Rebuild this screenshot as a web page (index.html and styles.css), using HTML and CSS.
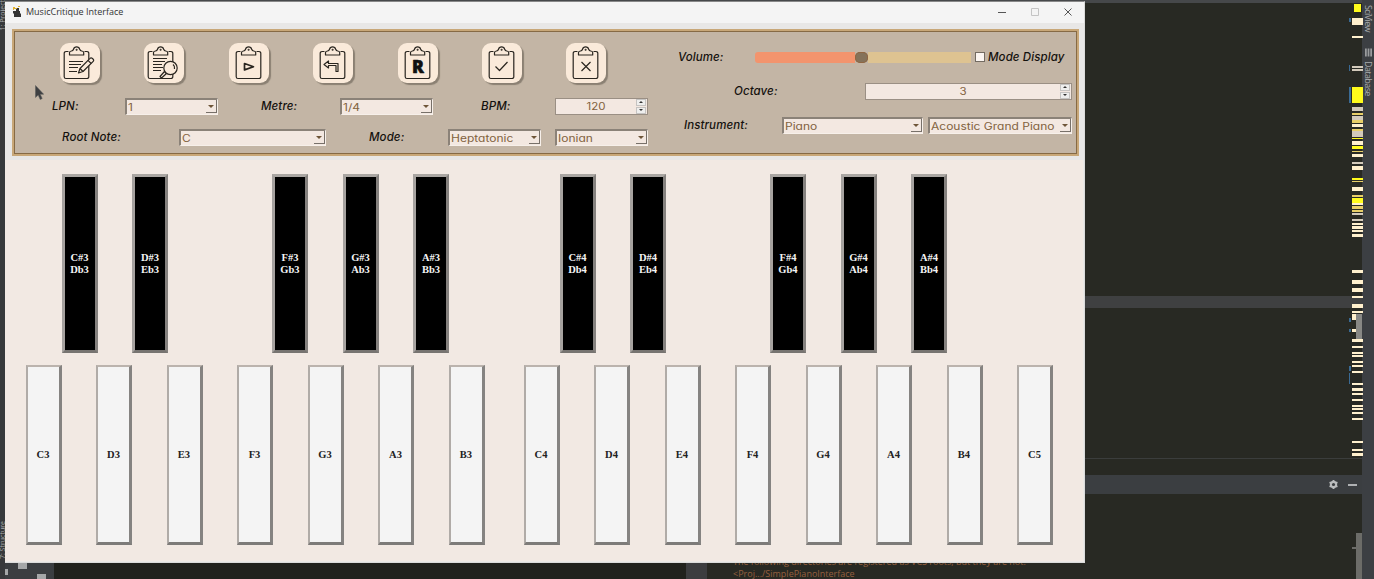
FILE: index.html
```html
<!doctype html>
<html lang="en">

<head>
    <meta charset="utf-8">
    <title>MusicCritique Interface</title>
    <link rel="stylesheet" href="styles.css">
</head>

<body>
    <!-- shared clipboard shape for the toolbar buttons -->
    <svg width="0" height="0" class="defs" aria-hidden="true">
        <symbol id="clipboard" viewBox="0 0 40 40">
            <path d="M11.500 8.500H9a1.800 1.800 0 0 0-1.800 1.800v23.400A1.800 1.800 0 0 0 9 35.500h21a1.800 1.800 0 0 0 1.800-1.800V10.300A1.800 1.800 0 0 0 30 8.500h-2.500" />
            <path d="M12.500 12v-2.500q0-1.200 2-1.500 1.500-.2 2-1.700a3.200 3.200 0 0 1 6.200 0q.5 1.500 2 1.700 2 .3 2 1.500V12z" />
            <circle cx="19.600" cy="6.800" r=".4" />
        </symbol>
    </svg>

    <div class="ide">
        <div class="ide-left"><span class="tab-project">1: Project</span><span class="tab-structure">7: Structure</span></div>
        <div class="ide-main">
            <div class="ide-top"></div>
            <div class="editor"></div>
            <div class="splitter"></div>
            <div class="editor-lower"></div>
            <div class="editor-status"></div>
            <div class="tool-header">
                <svg viewBox="0 0 12 12" class="gear"><circle cx="6" cy="6" r="3" /><path d="M6 1v10M1.700 3.500l8.600 5M1.700 8.500l8.600-5" /><circle class="hole" cx="6" cy="6" r="1.700" /></svg>
                <span class="minimize"></span>
            </div>
            <div class="console">
                <div class="console-side"><i></i><i></i><i></i></div>
                <div class="console-tree"></div>
                <div class="console-gutter"></div>
                <div class="console-log">
                    <div>The following directories are registered as VCS roots, but they are not:</div>
                    <div>&lt;Proj.../SimplePianoInterface</div>
                </div>
            </div>
            <svg class="stripe" viewBox="0 0 14 579">
                <g fill="#3a6a94">
                    <path d="M0 18h2v4H0zM0 65h1v6H0zM0 87h2v16H0zM0 318h2v4H0zM0 329h2v3H0zM0 366h2v5H0zM0 373h1v11H0z" />
                </g>
                <g fill="#fffb1c">
                    <path d="M5 4h7v8H5zM3 87h11v16H3zM3 138h11v1H3zM3 146h11v3H3zM3 178h11v2H3zM3 198h11v5H3z" />
                </g>
                <g fill="#e8cf68">
                    <path d="M3 113h11v2H3zM3 120h11v3H3zM3 129h11v2H3zM3 151h11v1H3zM3 181h11v1H3zM3 195h11v2H3zM3 206h11v3H3zM3 210h11v2H3z" />
                </g>
                <g fill="#d3cabb">
                    <path d="M3 66h11v2H3zM3 69h11v2H3zM3 107h11v4H3zM3 116h11v4H3zM3 131h11v6H3zM3 162h11v2H3zM3 213h11v2H3zM3 219h11v2H3z" />
                </g>
                <g fill="#fff0cd">
                    <path d="M3 18h11v7H3zM3 36h11v2H3zM3 124h11v3H3zM3 141h11v4H3zM3 154h11v3H3zM3 166h11v4H3zM3 187h11v4H3zM3 203h11v2H3zM3 223h11v2H3zM3 226h11v3H3zM3 230h11v2H3zM3 234h11v3H3zM3 270h11v3H3zM3 280h11v4H3zM3 288h11v4H3zM3 296h11v2H3zM3 304h11v4H3zM3 311h11v2H3zM3 314h5v6H3zM3 329h5v3H3zM3 339h11v3H3zM3 346h11v2H3zM3 352h11v2H3zM3 355h11v2H3zM3 361h11v2H3zM3 365h11v2H3zM3 371h11v2H3zM3 383h11v2H3zM3 388h11v3H3zM3 393h11v2H3zM3 399h11v2H3zM3 405h11v2H3zM3 408h11v2H3zM3 412h11v2H3zM3 418h11v2H3zM3 441h11v2H3zM3 449h11v2H3zM3 453h11v3H3z" />
                </g>
                <path fill="#888885" d="M7 314h6v25H7z" />
                <path fill="#6c6c68" d="M7 533h6v46H7zM3 547h4v2H3z" />
            </svg>
        </div>
        <div class="ide-right">
            <span class="tab-sciview">SciView</span>
            <svg viewBox="0 0 8 9" class="db-icon"><path d="M0 0h2v9H0zM3 0h2v9H3zM6 0h2v9H6z" /></svg>
            <span>Database</span>
        </div>
    </div>

    <div class="window">
        <div class="titlebar">
            <svg viewBox="0 0 10 12" class="app-icon">
                <path fill="#333" d="M1 5h7v2l1 1v3H2V8L1 7zM4 2h3v3H4z" />
                <path fill="#e3b32f" d="M1 1h2v1h2v1H2v1H1zM6 0h2v1H6z" />
            </svg>
            <span class="title">MusicCritique Interface</span>
            <div class="window-buttons">
                <svg viewBox="0 0 8 8"><path d="M0 4.500h8" /></svg>
                <svg viewBox="0 0 8 8" class="disabled"><path d="M.5.500h7v7h-7z" /></svg>
                <svg viewBox="0 0 8 8"><path d="M.5.500l7 7M7.500.500l-7 7" /></svg>
            </div>
        </div>

        <div class="panel">
            <div class="panel-left">
                <div class="toolbar">
                    <button class="tool"><svg viewBox="0 0 40 40">
                            <use href="#clipboard" transform="translate(-3)" />
                            <path d="M9 18.500h14M9 21.500h12M9 24.500h9M9 28.500h8" />
                            <path class="fill" d="M18.500 30l1.500-4.500L30 15.300a1.500 1.500 0 0 1 2.200 0l1 .9a1.500 1.500 0 0 1 0 2.200L23 28.500z" />
                            <path d="M28 17.300l3.200 3.200M20 25.500l3 3" />
                        </svg></button>
                    <button class="tool"><svg viewBox="0 0 40 40">
                            <use href="#clipboard" transform="translate(-3)" />
                            <path d="M9 15.500h14M9 18.500h12M9 21.500h9M9 24.500h10M9 27.500h8" />
                            <path class="fill" d="M20.500 28.500l2 2-5 4.500-1.500-1.500z" />
                            <circle class="fill" cx="26.500" cy="25" r="6.700" />
                            <path d="M29 21.500q2 1.500 1.500 4.500" />
                        </svg></button>
                    <button class="tool"><svg viewBox="0 0 40 40">
                            <use href="#clipboard" />
                            <path class="bold" d="M15.500 20.500l9 3.200-9 3.200z" />
                        </svg></button>
                    <button class="tool"><svg viewBox="0 0 40 40">
                            <use href="#clipboard" />
                            <path d="M11 21.500l4.500-3.500v2.500H25v8h-2v-6h-7.500V25z" />
                        </svg></button>
                    <button class="tool"><svg viewBox="0 0 40 40">
                            <use href="#clipboard" />
                            <text x="19.900" y="29.500" text-anchor="middle">R</text>
                        </svg></button>
                    <button class="tool"><svg viewBox="0 0 40 40">
                            <use href="#clipboard" />
                            <path d="M13.500 23.500l4 4 8-8.500" />
                        </svg></button>
                    <button class="tool"><svg viewBox="0 0 40 40">
                            <use href="#clipboard" />
                            <path d="M15.500 19l9 9M24.500 19l-9 9" />
                        </svg></button>
                </div>
                <div class="row row-lpn">
                    <label>LPN:</label>
                    <div class="combo"><span>1</span><i></i></div>
                    <label>Metre:</label>
                    <div class="combo"><span>1/4</span><i></i></div>
                    <label>BPM:</label>
                    <div class="spin"><span>120</span><i><b></b><b></b></i></div>
                </div>
                <div class="row row-root">
                    <label>Root Note:</label>
                    <div class="combo"><span>C</span><i></i></div>
                    <label>Mode:</label>
                    <div class="combo"><span>Heptatonic</span><i></i></div>
                    <div class="combo"><span>Ionian</span><i></i></div>
                </div>
            </div>

            <div class="panel-right">
                <div class="row row-volume">
                    <label>Volume:</label>
                    <div class="slider"><div class="slider-fill"></div><div class="slider-handle"></div><div class="slider-rest"></div></div>
                    <div class="checkbox"></div>
                    <label class="check-label">Mode Display</label>
                </div>
                <div class="row row-octave">
                    <label>Octave:</label>
                    <div class="spin"><span>3</span><i><b></b><b></b></i></div>
                </div>
                <div class="row row-instrument">
                    <label>Instrument:</label>
                    <div class="combo"><span>Piano</span><i></i></div>
                    <div class="combo"><span>Acoustic Grand Piano</span><i></i></div>
                </div>
            </div>
        </div>

        <div class="piano">
            <div class="octave">
                <div class="black-keys">
                    <div class="key black">C#3<br>Db3</div>
                    <div class="key black">D#3<br>Eb3</div>
                    <div class="key black skip">F#3<br>Gb3</div>
                    <div class="key black">G#3<br>Ab3</div>
                    <div class="key black">A#3<br>Bb3</div>
                </div>
                <div class="white-keys">
                    <div class="key">C3</div>
                    <div class="key">D3</div>
                    <div class="key">E3</div>
                    <div class="key">F3</div>
                    <div class="key">G3</div>
                    <div class="key">A3</div>
                    <div class="key">B3</div>
                </div>
            </div>
            <div class="octave">
                <div class="black-keys">
                    <div class="key black">C#4<br>Db4</div>
                    <div class="key black">D#4<br>Eb4</div>
                    <div class="key black skip">F#4<br>Gb4</div>
                    <div class="key black">G#4<br>Ab4</div>
                    <div class="key black">A#4<br>Bb4</div>
                </div>
                <div class="white-keys">
                    <div class="key">C4</div>
                    <div class="key">D4</div>
                    <div class="key">E4</div>
                    <div class="key">F4</div>
                    <div class="key">G4</div>
                    <div class="key">A4</div>
                    <div class="key">B4</div>
                    <div class="key">C5</div>
                </div>
            </div>
        </div>
    </div>

    <svg class="cursor" viewBox="0 0 9 15"><path d="M.5.500v12l2.700-2.500 2 4.500 2-1-2-4.200h3.500z" /></svg>
</body>

</html>
```
FILE: styles.css
```css
* {
    box-sizing: border-box;
}

body {
    margin: 0;
    width: 1374px;
    height: 579px;
    overflow: hidden;
    position: relative;
    background: #282923;
}

svg {
    display: block;
}

.defs {
    position: absolute;
}

/* editor behind the window */
.ide {
    display: flex;
    height: 579px;
    font-family: "Open Sans", sans-serif;
    font-size: 9px;
    color: #a9abad;
}

.ide-left {
    width: 5px;
    background: #37393b;
    display: flex;
    flex-direction: column;
    justify-content: space-between;
    padding: 0 0 20px;
}

.ide-left span {
    writing-mode: vertical-rl;
    transform: rotate(180deg);
    line-height: 5px;
    width: 5px;
    font-size: 7px;
}

.ide-main {
    flex: 1;
    display: flex;
    flex-direction: column;
    position: relative;
}

.ide-top {
    height: 3px;
    background: #46484a;
}

.editor {
    height: 293px;
}

.splitter {
    height: 12px;
    background: #3f4041;
}

.editor-lower {
    height: 151px;
    border-bottom: 1px solid #3b3d3c;
}

.editor-status {
    height: 16px;
}

.tool-header {
    height: 19px;
    background: #3b3e41;
    display: flex;
    align-items: center;
    justify-content: flex-end;
    gap: 9px;
    padding-right: 5px;
}

.gear {
    width: 11px;
    height: 11px;
    fill: #bbbdbe;
    stroke: #bbbdbe;
    stroke-width: 2;
}

.gear .hole {
    fill: #3b3e41;
    stroke: none;
}

.minimize {
    width: 9px;
    height: 2px;
    background: #afb1b3;
}

.console {
    flex: 1;
    display: flex;
    align-items: flex-end;
}

.console-side {
    width: 49px;
    height: 17px;
    background: #3b3e41;
    display: flex;
    gap: 10px;
    align-items: flex-start;
    padding-top: 1px;
}

.console-side i {
    width: 9px;
    height: 6px;
    background: #a5a7a8;
}

.console-side i:first-child {
    width: 3px;
    margin-top: 6px;
}

.console-side i:last-child {
    margin-top: 11px;
}

.console-tree {
    width: 632px;
    height: 17px;
    background: #21221d;
}

.console-gutter {
    width: 21px;
    height: 17px;
    background: #3c3d3f;
}

.console-log {
    flex: 1;
    padding-left: 26px;
    line-height: 12px;
    color: #96603f;
    white-space: nowrap;
    font-size: 9px;
    letter-spacing: 0;
    height: 23px;
}

.stripe {
    position: absolute;
    right: -1px;
    top: 0;
    width: 14px;
    height: 579px;
}

.ide-right {
    width: 12px;
    background: #3c3f43;
    display: flex;
    flex-direction: column;
    align-items: center;
    padding-top: 5px;
}

.ide-right span {
    writing-mode: vertical-rl;
    line-height: 12px;
    font-size: 9px;
    letter-spacing: -.6px;
}

.tab-sciview {
    height: 43px;
}

.db-icon {
    width: 7px;
    height: 9px;
    fill: #9a9c9e;
    margin-bottom: 4px;
}

/* application window */
.window {
    position: absolute;
    left: 5px;
    top: 1px;
    width: 1080px;
    height: 562px;
    background: #f2e9e3;
    border: 1px solid #dcdcdb;
    border-top-color: #888;
    border-left: 0;
    display: flex;
    flex-direction: column;
}

.titlebar {
    height: 21px;
    background: #f4f4f4;
    display: flex;
    align-items: center;
    padding: 0 12px 2px 7px;
}

.app-icon {
    width: 10px;
    height: 12px;
}

.title {
    margin-left: 4px;
    font: 9px "Open Sans", sans-serif;
    color: #333;
}

.window-buttons {
    margin-left: auto;
    display: flex;
    gap: 25px;
}

.window-buttons svg {
    width: 8px;
    height: 8px;
    fill: none;
    stroke: #555;
}

.window-buttons .disabled {
    stroke: #c4c4c4;
}

.panel {
    height: 137px;
    border: solid #e8e7e6;
    border-width: 6px 5px 4px 7px;
    display: flex;
    background: #c3b5a5;
    box-shadow: inset 0 0 0 2px #c8a778, inset 0 0 0 3px #866a45;
}

.panel-left {
    width: 654px;
    padding-top: 14px;
}

.panel-right {
    flex: 1;
}

.toolbar {
    display: flex;
    gap: 44.400px;
    padding-left: 48px;
}

.tool {
    width: 40px;
    height: 40px;
    padding: 0;
    border: 0;
    border-radius: 9px;
    background: #faeada;
    box-shadow: 2px 2px 1px #8b8073;
}

.tool svg {
    width: 40px;
    height: 40px;
    fill: none;
    stroke: #29251f;
    stroke-width: 1.200;
    stroke-linejoin: round;
}

.tool .fill {
    fill: #faeada;
}

.tool .bold {
    stroke-width: 1.700;
}

.tool text {
    font: 800 17.500px "Open Sans", sans-serif;
    fill: #111;
    stroke: #111;
    stroke-width: .6;
}

.row {
    display: flex;
    align-items: center;
    height: 18px;
}

label {
    font: italic 500 11.500px Inter, sans-serif;
    font-feature-settings: "cv11";
    letter-spacing: .1px;
    color: #14110e;
    white-space: nowrap;
}

.combo,
.spin {
    height: 17px;
    width: 93px;
    background: #f3e8e1;
    display: flex;
    align-items: center;
    font: 10px Inter, sans-serif;
    font-feature-settings: "cv11";
    color: #82623e;
    white-space: nowrap;
}

.combo {
    border: solid;
    border-width: 2px 1px 1px 2px;
    border-color: #8b8278 #f7f0ea #f7f0ea #8b8278;
    padding-left: 1px;
    justify-content: space-between;
}

/* wide letterforms for the field values */
.combo span {
    width: 0;
    transform: scaleX(1.200);
    transform-origin: left;
}

.combo i {
    flex: none;
    width: 11px;
    height: 13px;
    border: solid #777069;
    border-width: 0 1px 1px 0;
    display: flex;
    align-items: center;
    justify-content: center;
}

.combo i::before {
    content: "";
    border: 3px solid transparent;
    border-top-color: #6e5538;
    border-bottom: 0;
}

.spin {
    border: 1px solid #9a8f84;
}

.spin span {
    flex: 1;
    text-align: center;
    transform: scaleX(1.150);
}

.spin i {
    width: 11px;
    display: flex;
    flex-direction: column;
    gap: 1px;
}

.spin b {
    height: 7px;
    width: 10px;
    border: 1px solid #c5c3c1;
    background: #eeeeed;
    display: flex;
    align-items: center;
    justify-content: center;
}

.spin b::before {
    content: "";
    border: 2px solid transparent;
    border-bottom-color: #333;
    border-top: 0;
}

.spin b:last-child::before {
    transform: rotate(180deg);
}

.row-lpn {
    margin-top: 14px;
    padding-left: 40px;
}

.row-lpn label:nth-of-type(1) {
    width: 73px;
}

.row-lpn label:nth-of-type(2) {
    width: 79px;
    margin-left: 43px;
}

.row-lpn label:nth-of-type(3) {
    width: 74px;
    margin-left: 48px;
}

.row-root {
    margin-top: 13px;
    padding-left: 50px;
}

.row-root label:nth-of-type(1) {
    width: 117px;
}

.row-root .combo:nth-of-type(1) {
    width: 147px;
}

.row-root label:nth-of-type(2) {
    width: 79px;
    margin-left: 43px;
}

.row-root .combo:last-child {
    margin-left: 14px;
}

.row-volume {
    margin-top: 19px;
    padding-left: 12px;
}

.row-volume label:first-child {
    width: 77px;
}

.slider {
    width: 216px;
    height: 11px;
    display: flex;
}

.slider-fill {
    width: 100px;
    background: #f3946d;
    border-radius: 3px 0 0 3px;
}

.slider-handle {
    width: 13px;
    border-radius: 5px;
    background: #85725a;
    box-shadow: inset 0 0 0 1px #906642;
}

.slider-rest {
    flex: 1;
    background: #dec391;
}

.checkbox {
    width: 10px;
    height: 10px;
    margin: 0 3px 0 4px;
    background: #fbf5f1;
    border: 1px solid #736b62;
}

.row-octave {
    margin-top: 16px;
    padding-left: 68px;
}

.row-octave label {
    width: 131px;
}

.row-octave .spin {
    width: 207px;
}

.row-instrument {
    margin-top: 16px;
    padding-left: 18px;
}

.row-instrument label {
    width: 98px;
}

.row-instrument .combo {
    width: 141px;
}

.row-instrument .combo:last-child {
    width: 144px;
    margin-left: 5px;
}

/* keyboard */
.piano {
    flex: 1;
    display: flex;
    padding: 14px 0 0 20.500px;
    border: solid #ebe9e6;
    border-width: 0 1px 1px 0;
}

.octave {
    width: 498px;
}

.black-keys,
.white-keys {
    display: flex;
    gap: 34.500px;
}

.black-keys {
    padding-left: 36px;
    margin-bottom: 12px;
}

.skip {
    margin-left: 69.500px;
}

.key {
    flex: none;
    width: 36px;
    height: 180px;
    display: flex;
    align-items: center;
    justify-content: center;
    text-align: center;
    padding-top: 1px;
    background: #f4f4f4;
    border: solid;
    border-width: 2px 3px 3px 2px;
    border-color: #bbb3ad #858381 #7d7b79 #b0aba7;
    font: bold 10.500px/12px "Liberation Serif", serif;
    color: #222;
}

.key.black {
    height: 179px;
    background: #000;
    color: #f4f4f4;
    border-width: 3px;
    border-color: #aaa6a2 #85817e #777471 #a6a29f;
}

.cursor {
    position: absolute;
    left: 35px;
    top: 85px;
    width: 9px;
    height: 15px;
    fill: #3f4042;
    stroke: #595a5b;
    stroke-width: .5;
}
```
